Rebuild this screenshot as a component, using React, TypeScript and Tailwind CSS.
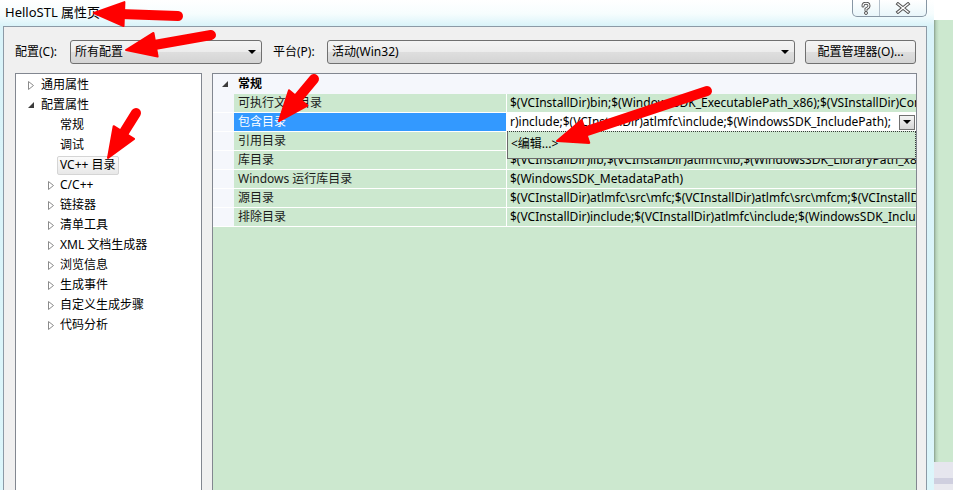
import React from "react";

function Collapsed() {
  return (
    <svg width="6" height="9" viewBox="0 0 6 9" className="shrink-0">
      <polygon points="0.5,0.5 5.5,4.5 0.5,8.5" fill="#ffffff" stroke="#8a8a8a" strokeWidth="1" />
    </svg>
  );
}

function Expanded() {
  return (
    <svg width="6" height="6" viewBox="0 0 6 6" className="shrink-0">
      <polygon points="6,0 6,6 0,6" fill="#3c3c3c" />
    </svg>
  );
}

function DownTri() {
  return (
    <svg width="8" height="4" viewBox="0 0 8 4" className="shrink-0">
      <polygon points="0,0 8,0 4,4" fill="#000000" />
    </svg>
  );
}

function Arrow({ x1, y1, x2, y2 }: { x1: number; y1: number; x2: number; y2: number }) {
  const dx = x2 - x1;
  const dy = y2 - y1;
  const len = Math.hypot(dx, dy);
  const ux = dx / len;
  const uy = dy / len;
  const px = -uy;
  const py = ux;
  const hl = 30;
  const hw = 12;
  const bx = x2 - ux * hl;
  const by = y2 - uy * hl;
  return (
    <g>
      <line x1={x1} y1={y1} x2={bx + ux * 4} y2={by + uy * 4} stroke="#ff0000" strokeWidth="10" strokeLinecap="round" />
      <polygon
        points={`${x2},${y2} ${bx + px * hw},${by + py * hw} ${bx - px * hw},${by - py * hw}`}
        fill="#ff0000"
        stroke="#ff0000"
        strokeWidth="2"
        strokeLinejoin="round"
      />
    </g>
  );
}

const subItems = ["C/C++", "链接器", "清单工具", "XML 文档生成器", "浏览信息", "生成事件", "自定义生成步骤", "代码分析"];

const rows = [
  { name: "可执行文件目录", value: "$(VCInstallDir)bin;$(WindowsSDK_ExecutablePath_x86);$(VSInstallDir)Common7\\Tools\\bin;$(VSInstallDir)Common7\\tools" },
  { name: "包含目录", value: "", selected: true },
  { name: "引用目录", value: "$(VCInstallDir)atlmfc\\lib;$(VCInstallDir)lib" },
  { name: "库目录", value: "$(VCInstallDir)lib;$(VCInstallDir)atlmfc\\lib;$(WindowsSDK_LibraryPath_x86);" },
  { name: "Windows 运行库目录", value: "$(WindowsSDK_MetadataPath)" },
  { name: "源目录", value: "$(VCInstallDir)atlmfc\\src\\mfc;$(VCInstallDir)atlmfc\\src\\mfcm;$(VCInstallDir)atlmfc\\src\\atl;$(VCInstallDir)crt\\src;" },
  { name: "排除目录", value: "$(VCInstallDir)include;$(VCInstallDir)atlmfc\\include;$(WindowsSDK_IncludePath);$(MSBuild_ExecutablePath)" },
];

const btnBg = "bg-[linear-gradient(to_bottom,#f4f4f4_0%,#ececec_50%,#dedede_51%,#d4d4d4_100%)]";

export default function App() {
  return (
    <div className='relative w-[953px] h-[490px] overflow-hidden flex bg-[#cce8cf] text-[12px] leading-[16px] text-[#1a1a1a] font-["Noto_Sans","Noto_Sans_CJK_SC",sans-serif]'>
      {/* Dialog window */}
      <div className="w-[934px] h-full flex flex-col shrink-0 pl-[3px] pr-[7px] bg-[linear-gradient(to_bottom,#ffffff_0px,#f6fdfe_14px,#d9f3f9_26px,#dcf6fb_100%)]">
        {/* Title bar */}
        <div className="h-[26px] flex items-start shrink-0">
          <div className="pl-[2px] pt-[4px] text-[13px] leading-[16px] text-black">HelloSTL 属性页</div>
          <div className="ml-auto h-[17px] w-[75px] flex border border-t-0 border-[#8796a4] rounded-b-[5px] bg-[linear-gradient(to_bottom,#ffffff,#e9f6fa)]">
            <div className="w-[27px] h-full flex items-center justify-center border-r border-[#b3bfca]">
              <svg width="10" height="13" viewBox="0 0 10 13">
                <path d="M2 4 Q2 1.2 5 1.2 Q8 1.2 8 3.8 Q8 5.6 5.6 6.6 L5 7 L5 8.6" fill="none" stroke="#555" strokeWidth="3" strokeLinecap="round" />
                <path d="M2 4 Q2 1.2 5 1.2 Q8 1.2 8 3.8 Q8 5.6 5.6 6.6 L5 7 L5 8.6" fill="none" stroke="#ffffff" strokeWidth="1.1" strokeLinecap="round" />
                <circle cx="5" cy="11" r="1.5" fill="#ffffff" stroke="#555" strokeWidth="1" />
              </svg>
            </div>
            <div className="flex-1 h-full flex items-center justify-center">
              <svg width="16" height="12" viewBox="0 0 16 12">
                <path d="M3 2 L13 10 M13 2 L3 10" stroke="#555" strokeWidth="3.4" strokeLinecap="square" />
                <path d="M3 2 L13 10 M13 2 L3 10" stroke="#ffffff" strokeWidth="1.4" strokeLinecap="square" />
              </svg>
            </div>
          </div>
        </div>

        {/* Client area */}
        <div className="flex-1 flex flex-col border border-b-0 border-[#8c9aa6] bg-[#f0f0f0] min-h-0">
          {/* Config row */}
          <div className="mt-[13px] ml-[11px] h-[24px] flex items-center shrink-0">
            <div className="w-[55px] text-black">配置(C):</div>
            <div className={`w-[192px] h-[24px] flex items-center justify-between pl-[4px] pr-[5px] border border-[#707070] rounded-[3px] ${btnBg} text-black`}>
              <span>所有配置</span>
              <DownTri />
            </div>
            <div className="ml-[11px] w-[54px] text-black">平台(P):</div>
            <div className={`w-[468px] h-[24px] flex items-center justify-between pl-[4px] pr-[5px] border border-[#707070] rounded-[3px] ${btnBg} text-black`}>
              <span>活动(Win32)</span>
              <DownTri />
            </div>
            <div className={`ml-[10px] w-[111px] h-[24px] flex items-center justify-center border border-[#707070] rounded-[3px] ${btnBg} text-black`}>
              配置管理器(O)...
            </div>
          </div>

          {/* Panels */}
          <div className="mt-[9px] ml-[11px] flex gap-[10px] flex-1 min-h-0">
            {/* Tree */}
            <div className="w-[187px] h-[440px] shrink-0 border border-[#828790] bg-white pt-[1px] text-black">
              <div className="h-[20px] flex items-center pl-[12px]">
                <div className="w-[13px] flex items-center">
                  <Collapsed />
                </div>
                <span>通用属性</span>
              </div>
              <div className="h-[20px] flex items-center pl-[12px]">
                <div className="w-[13px] flex items-center">
                  <Expanded />
                </div>
                <span>配置属性</span>
              </div>
              <div className="h-[20px] flex items-center pl-[44px]">常规</div>
              <div className="h-[20px] flex items-center pl-[44px]">调试</div>
              <div className="h-[20px] flex items-center pl-[41px]">
                <span className="h-[19px] flex items-center px-[2px] border border-[#d5d5d5] rounded-[2px] bg-[linear-gradient(to_bottom,#fbfbfb,#e8e8e8)]">
                  VC++ 目录
                </span>
              </div>
              {subItems.map((s) => (
                <div key={s} className="h-[20px] flex items-center pl-[32px]">
                  <div className="w-[12px] flex items-center">
                    <Collapsed />
                  </div>
                  <span>{s}</span>
                </div>
              ))}
            </div>

            {/* Property grid */}
            <div className="w-[705px] h-[440px] shrink-0 border border-[#828790] bg-[#cce8cf]">
              <div className="relative">
                <div className="h-[20px] flex items-center pl-[9px] bg-[#f5f7fc]">
                  <Expanded />
                  <span className="ml-[10px] font-bold text-black">常规</span>
                </div>
                {rows.map((r) => (
                  <div key={r.name} className="h-[19px] flex border-b border-white">
                    <div className="w-[21px] shrink-0 bg-[#f5f7fc]" />
                    <div
                      className={
                        r.selected
                          ? "w-[273px] shrink-0 flex items-center pl-[4px] border-r border-white bg-[#3399ff] text-white"
                          : "w-[273px] shrink-0 flex items-center pl-[4px] border-r border-white text-[#1a1a1a]"
                      }
                    >
                      {r.name}
                    </div>
                    {r.selected ? (
                      <div className="flex-1 min-w-0 flex items-center bg-white pl-[3px] text-black">
                        <span className="flex-1 whitespace-nowrap overflow-hidden">
                          r)include;$(VCInstallDir)atlmfc\include;$(WindowsSDK_IncludePath);
                        </span>
                        <div className="w-[16px] h-[15px] mr-[1px] flex items-center justify-center border border-[#707070] bg-[linear-gradient(to_bottom,#f4f4f4,#d6d6d6)]">
                          <DownTri />
                        </div>
                      </div>
                    ) : (
                      <div className="flex-1 min-w-0 flex items-center pl-[3px] text-black whitespace-nowrap overflow-hidden">
                        {r.value}
                      </div>
                    )}
                  </div>
                ))}

                {/* Dropdown popup */}
                <div className="absolute left-[294px] top-[57px] w-[409px] h-[28px] bg-[#cce8cf] border border-dotted border-[#3a3a3a] [border-left-style:solid] [border-bottom-style:solid] [border-left-color:#6a6a6a] [border-bottom-color:#6a6a6a] pl-[3px] pt-[4px] text-black">
                  &lt;编辑...&gt;
                </div>
              </div>
            </div>
          </div>
        </div>
      </div>

      {/* Area behind the dialog */}
      <div className="flex-1 flex flex-col">
        <div className="h-[20px] bg-white" />
        <div className="flex-1 flex flex-col bg-[linear-gradient(to_right,#8aa08e_0px,#b7d3bb_2px,#cce8cf_5px)]">
          <div className="flex-1" />
          <div className="h-[16px] bg-[#e6e6ee]" />
          <div className="h-[6px] bg-[#cfcfdf]" />
          <div className="h-[6px] bg-[#e9e9ef]" />
        </div>
      </div>

      {/* Red annotation arrows */}
      <svg className="absolute left-0 top-0 pointer-events-none" width="953" height="490" viewBox="0 0 953 490">
        <Arrow x1={178} y1={16} x2={94} y2={13} />
        <Arrow x1={211} y1={35} x2={126} y2={50} />
        <Arrow x1={136} y1={113} x2={108} y2={158} />
        <Arrow x1={314} y1={79} x2={279} y2={121} />
        <Arrow x1={707} y1={91} x2={557} y2={141} />
      </svg>
    </div>
  );
}
